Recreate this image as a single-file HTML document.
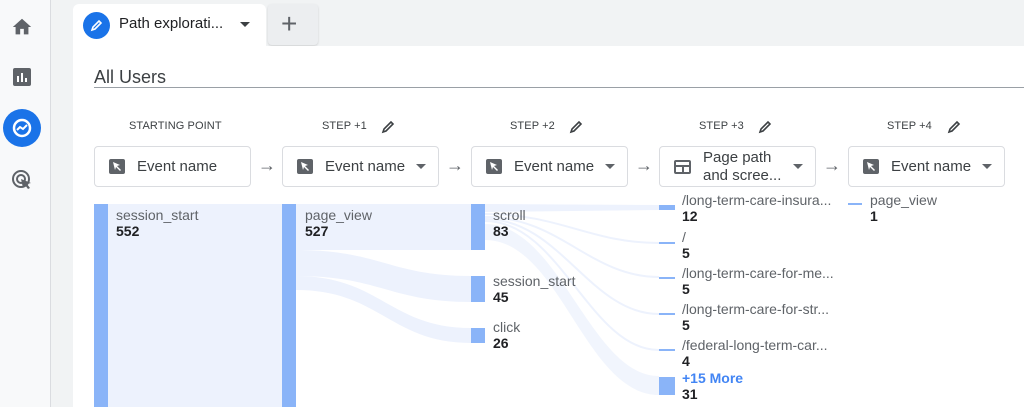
<!DOCTYPE html>
<html><head><style>
body{margin:0;width:1024px;height:407px;overflow:hidden;font-family:"Liberation Sans",Arial,sans-serif;background:#f1f3f4;position:relative}
.a{position:absolute}
.side{left:0;top:0;width:50px;height:407px;background:#f8f9fa;border-right:1px solid #dadce0}
.box{position:absolute;top:146px;width:155px;height:39px;border:1px solid #dadce0;border-radius:4px;background:#fff;font-size:15px;color:#3c4043;display:flex;align-items:center}
.ic{width:16px;height:15px;background:#5f6368;border-radius:2px;margin-left:14px;margin-right:12px;position:relative}
.ic svg{position:absolute;left:4px;top:3px}
.dd{position:absolute;right:12px;top:17px;border-left:5px solid transparent;border-right:5px solid transparent;border-top:5px solid #5f6368}
.hd{position:absolute;top:120px;font-size:11px;color:#3c4043;letter-spacing:.1px}
.arr{position:absolute;top:155px;font-size:18px;color:#5f6368}
.lb{position:absolute;font-size:14px;color:#5f6368;line-height:16px}
.lb b{display:block;color:#202124;font-size:14px}
.bar{position:absolute;background:#8ab4f8}
</style></head><body>
<div class="a side"></div>
<svg class="a" style="left:11px;top:16px" width="22" height="22" viewBox="0 0 24 24"><path d="M10 20v-6h4v6h5v-8h3L12 3 2 12h3v8z" fill="#5f6368"/></svg>
<svg class="a" style="left:12px;top:67px" width="20" height="20" viewBox="0 0 20 20"><rect x="1" y="1" width="18" height="18" rx="2" fill="#5f6368"/><rect x="5" y="9" width="2" height="6" fill="#fff"/><rect x="9" y="6" width="2" height="9" fill="#fff"/><rect x="13" y="11" width="2" height="4" fill="#fff"/></svg>
<div class="a" style="left:3px;top:109px;width:38px;height:38px;border-radius:50%;background:#1a73e8"></div>
<svg class="a" style="left:10px;top:116px" width="24" height="24" viewBox="0 0 24 24"><circle cx="12" cy="12" r="8" fill="none" stroke="#fff" stroke-width="2.5"/><path d="M7 14l3-3 3 2 4-4" fill="none" stroke="#fff" stroke-width="2"/></svg>
<svg class="a" style="left:10px;top:168px" width="24" height="24" viewBox="0 0 24 24"><circle cx="11" cy="11" r="8" fill="none" stroke="#5f6368" stroke-width="2"/><circle cx="11" cy="11" r="4" fill="none" stroke="#5f6368" stroke-width="2"/><path d="M11 11l10 4-4 1 3 4-2 1-3-4-2 3z" fill="#5f6368"/></svg>
<div class="a" style="left:73px;top:4px;width:193px;height:43px;background:#fff;border-radius:6px 6px 0 0"></div>
<div class="a" style="left:83px;top:12px;width:27px;height:27px;border-radius:50%;background:#1a73e8"></div>
<svg class="a" style="left:89px;top:18px" width="15" height="15" viewBox="0 0 15 15"><path d="M3 12l1-3 6-6 2 2-6 6z" fill="none" stroke="#fff" stroke-width="1.6"/></svg>
<div class="a" style="left:119px;top:15px;font-size:15px;color:#202124">Path explorati...</div>
<div class="a" style="left:240px;top:22px;border-left:5px solid transparent;border-right:5px solid transparent;border-top:5px solid #3c4043"></div>
<div class="a" style="left:268px;top:4px;width:50px;height:41px;background:#eceef0;border-radius:4px;box-shadow:0 1px 2px rgba(0,0,0,.15)"></div>
<div class="a" style="left:281px;top:8px;font-size:28px;color:#5f6368;font-weight:300">+</div>
<div class="a" style="left:73px;top:46px;width:951px;height:361px;background:#fff"></div>
<div class="a" style="left:94px;top:67px;font-size:18px;color:#3c4043">All Users</div>
<div class="a" style="left:94px;top:87px;width:930px;height:1px;background:#9aa0a6"></div>

<div class="hd" style="left:129px">STARTING POINT</div>
<div class="hd" style="left:322px">STEP +1</div>
<div class="hd" style="left:510px">STEP +2</div>
<div class="hd" style="left:699px">STEP +3</div>
<div class="hd" style="left:887px">STEP +4</div>
<svg class="a" style="left:380px;top:119px" width="16" height="16" viewBox="0 0 16 16"><path d="M3 13l1-3 7-7 2 2-7 7z" fill="none" stroke="#3c4043" stroke-width="1.6"/></svg>
<svg class="a" style="left:568px;top:119px" width="16" height="16" viewBox="0 0 16 16"><path d="M3 13l1-3 7-7 2 2-7 7z" fill="none" stroke="#3c4043" stroke-width="1.6"/></svg>
<svg class="a" style="left:757px;top:119px" width="16" height="16" viewBox="0 0 16 16"><path d="M3 13l1-3 7-7 2 2-7 7z" fill="none" stroke="#3c4043" stroke-width="1.6"/></svg>
<svg class="a" style="left:946px;top:119px" width="16" height="16" viewBox="0 0 16 16"><path d="M3 13l1-3 7-7 2 2-7 7z" fill="none" stroke="#3c4043" stroke-width="1.6"/></svg>

<div class="box" style="left:94px"><div class="ic"><svg width="9" height="9" viewBox="0 0 9 9"><path d="M0 0l7 3-3 1 4 4-1 1-4-4-1 3z" fill="#fff"/></svg></div>Event name</div>
<div class="box" style="left:282px"><div class="ic"><svg width="9" height="9" viewBox="0 0 9 9"><path d="M0 0l7 3-3 1 4 4-1 1-4-4-1 3z" fill="#fff"/></svg></div>Event name<div class="dd"></div></div>
<div class="box" style="left:471px"><div class="ic"><svg width="9" height="9" viewBox="0 0 9 9"><path d="M0 0l7 3-3 1 4 4-1 1-4-4-1 3z" fill="#fff"/></svg></div>Event name<div class="dd"></div></div>
<div class="box" style="left:659px;line-height:18px"><div class="ic" style="background:#fff;border:2px solid #5f6368;width:13px;height:10px;border-radius:2px"><div style="position:absolute;left:0;right:0;top:3px;height:2px;background:#5f6368"></div><div style="position:absolute;left:6px;top:4px;width:2px;bottom:0;background:#5f6368"></div></div>Page path<br>and scree...<div class="dd"></div></div>
<div class="box" style="left:848px"><div class="ic"><svg width="9" height="9" viewBox="0 0 9 9"><path d="M0 0l7 3-3 1 4 4-1 1-4-4-1 3z" fill="#fff"/></svg></div>Event name<div class="dd"></div></div>
<div class="arr" style="left:258px">→</div>
<div class="arr" style="left:446px">→</div>
<div class="arr" style="left:635px">→</div>
<div class="arr" style="left:823px">→</div>

<svg class="a" style="left:0;top:0" width="1024" height="407">
<g fill="#edf2fd">
<rect x="108" y="204" width="174" height="203"/>
<rect x="296" y="204" width="175" height="46"/>
<path d="M296 250 C380 250 390 276 471 276 L471 302 C390 302 380 276 296 276Z"/>
<path d="M296 276 C380 276 390 328 471 328 L471 343 C390 343 380 290 296 290Z"/>
<path d="M485 204 L659 205 L659 210 L485 212Z"/>
<path d="M485 224 C560 224 590 376 659 376 L659 395 C585 395 560 240 485 240Z" opacity=".8"/>
<path d="M862 203 L848 203 L848 205 L862 205Z"/>
</g>
<g fill="none" stroke="#edf2fd" stroke-width="2">
<path d="M485 214 C560 214 590 243 659 243"/>
<path d="M485 217 C560 217 590 277 659 277"/>
<path d="M485 219 C560 219 590 314 659 314"/>
<path d="M485 221 C560 221 590 350 659 350"/>
</g>
</svg>
<div class="bar" style="left:94px;top:204px;width:14px;height:203px"></div>
<div class="bar" style="left:282px;top:204px;width:14px;height:203px"></div>
<div class="bar" style="left:471px;top:204px;width:14px;height:46px"></div>
<div class="bar" style="left:471px;top:276px;width:14px;height:26px"></div>
<div class="bar" style="left:471px;top:328px;width:14px;height:15px"></div>
<div class="bar" style="left:659px;top:205px;width:16px;height:5px"></div>
<div class="bar" style="left:659px;top:242px;width:16px;height:2px"></div>
<div class="bar" style="left:659px;top:277px;width:16px;height:2px"></div>
<div class="bar" style="left:659px;top:313px;width:16px;height:2px"></div>
<div class="bar" style="left:659px;top:349px;width:16px;height:2px"></div>
<div class="bar" style="left:659px;top:377px;width:16px;height:18px"></div>
<div class="bar" style="left:848px;top:203px;width:14px;height:2px"></div>

<div class="lb" style="left:116px;top:207px">session_start<b>552</b></div>
<div class="lb" style="left:305px;top:207px">page_view<b>527</b></div>
<div class="lb" style="left:493px;top:207px">scroll<b>83</b></div>
<div class="lb" style="left:493px;top:273px">session_start<b>45</b></div>
<div class="lb" style="left:493px;top:319px">click<b>26</b></div>
<div class="lb" style="left:682px;top:192px">/long-term-care-insura...<b>12</b></div>
<div class="lb" style="left:682px;top:229px">/<b>5</b></div>
<div class="lb" style="left:682px;top:265px">/long-term-care-for-me...<b>5</b></div>
<div class="lb" style="left:682px;top:301px">/long-term-care-for-str...<b>5</b></div>
<div class="lb" style="left:682px;top:337px">/federal-long-term-car...<b>4</b></div>
<div class="lb" style="left:682px;top:370px;color:#4285f4;font-weight:bold">+15 More<b>31</b></div>
<div class="lb" style="left:870px;top:192px">page_view<b>1</b></div>
</body></html>
